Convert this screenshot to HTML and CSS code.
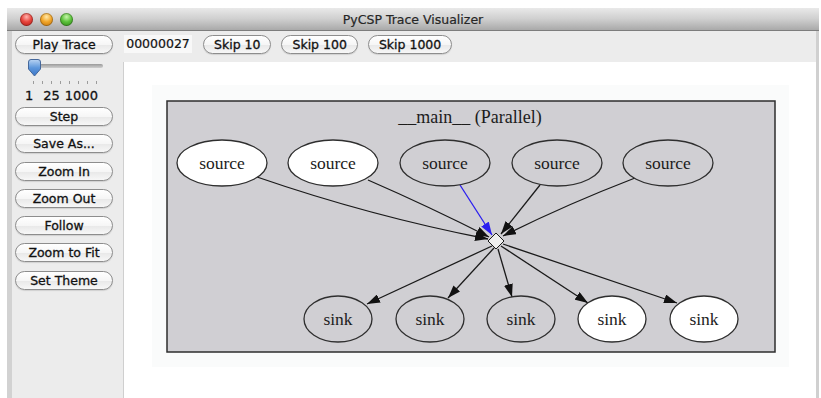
FILE: index.html
```html
<!DOCTYPE html>
<html lang="en">
<head>
    <meta charset="UTF-8">
    <title>PyCSP Trace Visualizer</title>
    <link rel="stylesheet" href="styles.css">
</head>
<body>

<div class="window">
    <div class="titlebar">
        <div class="lights">
            <span class="light red"></span>
            <span class="light amber"></span>
            <span class="light green"></span>
        </div>
        <div class="title">PyCSP Trace Visualizer</div>
        <div></div>
    </div>

    <div class="content">
        <div class="sidebar">
            <button class="btn">Play Trace</button>

            <div class="slider">
                <div class="track"></div>
                <svg class="thumb" width="15" height="18" viewBox="0 0 15 18">
                    <defs>
                        <linearGradient id="thumbFill" x1="0" y1="0" x2="0" y2="1">
                            <stop offset="0" stop-color="#b9d4f3"/>
                            <stop offset="0.5" stop-color="#5d97dc"/>
                            <stop offset="1" stop-color="#3a74c6"/>
                        </linearGradient>
                    </defs>
                    <path d="M1.5,3 Q1.5,0.5 4,0.5 H11 Q13.5,0.5 13.5,3 V10 L7.5,17 L1.5,10 Z" fill="url(#thumbFill)" stroke="#45689b" stroke-width="1"/>
                </svg>
                <div class="ticks">
                    <i></i><i></i><i></i><i></i><i></i><i></i><i></i><i></i>
                </div>
            </div>
            <div class="speed-labels">
                <span>1</span><span class="mid">25</span><span class="max">1000</span>
            </div>

            <div class="actions">
                <button class="btn">Step</button>
                <button class="btn">Save As...</button>
                <button class="btn">Zoom In</button>
                <button class="btn">Zoom Out</button>
                <button class="btn">Follow</button>
                <button class="btn">Zoom to Fit</button>
                <button class="btn">Set Theme</button>
            </div>
        </div>

        <div class="right">
            <div class="toolbar">
                <span class="counter">00000027</span>
                <button class="btn skip">Skip 10</button>
                <button class="btn skip">Skip 100</button>
                <button class="btn skip">Skip 1000</button>
            </div>

            <div class="canvas">
                <svg class="graph" width="691" height="336" viewBox="124 62 691 336">
                    <defs>
                        <marker id="head" viewBox="0 0 13 9" refX="13" refY="4.5" markerWidth="13" markerHeight="9" orient="auto" markerUnits="userSpaceOnUse">
                            <path d="M0,0 L13,4.5 L0,9 Z" fill="#111"/>
                        </marker>
                        <marker id="headBlue" viewBox="0 0 13 9" refX="13" refY="4.5" markerWidth="13" markerHeight="9" orient="auto" markerUnits="userSpaceOnUse">
                            <path d="M0,0 L13,4.5 L0,9 Z" fill="#2a1ef0"/>
                        </marker>
                    </defs>

                    <rect class="page" x="152" y="85" width="637" height="282"/>
                    <rect class="cluster" x="167" y="101" width="608" height="251"/>
                    <text class="cluster-label" x="470" y="123">__main__ (Parallel)</text>

                    <!-- edges into the channel -->
                    <path class="edge" d="M257,177 Q370,216 488,239" marker-end="url(#head)"/>
                    <path class="edge" d="M368,180 Q430,207 489,237" marker-end="url(#head)"/>
                    <path class="edge blue" d="M460,185 L492,235" marker-end="url(#headBlue)"/>
                    <path class="edge" d="M540,185 L501,234" marker-end="url(#head)"/>
                    <path class="edge" d="M635,178 Q565,205 503,236" marker-end="url(#head)"/>

                    <!-- edges out of the channel -->
                    <path class="edge" d="M492,246 L367,304" marker-end="url(#head)"/>
                    <path class="edge" d="M494,248 L448,298" marker-end="url(#head)"/>
                    <path class="edge" d="M498,249 L512,297" marker-end="url(#head)"/>
                    <path class="edge" d="M501,246 L588,303" marker-end="url(#head)"/>
                    <path class="edge" d="M503,244 L677,303" marker-end="url(#head)"/>

                    <polygon class="channel" points="496,233 504,241 496,249 488,241"/>

                    <ellipse class="node active" cx="222" cy="163" rx="45" ry="23"/>
                    <text class="label" x="222" y="169">source</text>
                    <ellipse class="node active" cx="333" cy="163" rx="45" ry="23"/>
                    <text class="label" x="333" y="169">source</text>
                    <ellipse class="node" cx="445" cy="163" rx="45" ry="23"/>
                    <text class="label" x="445" y="169">source</text>
                    <ellipse class="node" cx="557" cy="163" rx="45" ry="23"/>
                    <text class="label" x="557" y="169">source</text>
                    <ellipse class="node" cx="668" cy="163" rx="45" ry="23"/>
                    <text class="label" x="668" y="169">source</text>

                    <ellipse class="node" cx="338" cy="319" rx="34" ry="23"/>
                    <text class="label" x="338" y="325">sink</text>
                    <ellipse class="node" cx="430" cy="319" rx="34" ry="23"/>
                    <text class="label" x="430" y="325">sink</text>
                    <ellipse class="node" cx="521" cy="319" rx="34" ry="23"/>
                    <text class="label" x="521" y="325">sink</text>
                    <ellipse class="node active" cx="612" cy="319" rx="34" ry="23"/>
                    <text class="label" x="612" y="325">sink</text>
                    <ellipse class="node active" cx="704" cy="319" rx="34" ry="23"/>
                    <text class="label" x="704" y="325">sink</text>
                </svg>
            </div>
        </div>
    </div>
</div>

</body>
</html>
```

FILE: styles.css
```css
body {
    margin: 0;
    background-color: #ffffff;
    font-family: "DejaVu Sans", Verdana, sans-serif;
    overflow: hidden;
}
.window {
    margin: 8px 0 0 7px;
    width: 804px;
    height: 390px;
    border-left: 5px solid #d2d2d2;
    border-right: 3px solid #d0d0d0;
    background-color: #ececec;
    display: flex;
    flex-direction: column;
}
.titlebar {
    height: 22px;
    border-bottom: 1px solid #7d7d7d;
    background: linear-gradient(#e9e9e9, #cfcfcf 50%, #a9a9a9);
    display: grid;
    grid-template-columns: 1fr auto 1fr;
    align-items: center;
    margin-left: -5px;
    margin-right: -3px;
}
.lights {
    display: flex;
    gap: 7px;
    padding-left: 13px;
}
.light {
    width: 13px;
    height: 13px;
    border-radius: 50%;
    box-shadow: inset 0 0 0 1px rgba(0, 0, 0, 0.25);
}
.red {
    background: radial-gradient(circle at 50% 30%, #ffb4ae 0, #e8463e 45%, #a9140f 100%);
}
.amber {
    background: radial-gradient(circle at 50% 30%, #ffe9a8 0, #f2a62a 45%, #b86b05 100%);
}
.green {
    background: radial-gradient(circle at 50% 30%, #c6f5a9 0, #5cc23c 45%, #2a7d12 100%);
}
.title {
    font-size: 12.5px;
    color: #262626;
    -webkit-text-stroke: 0.2px #262626;
}
.content {
    flex: 1;
    display: flex;
    min-height: 0;
}
.sidebar {
    width: 98px;
    padding: 4px 10px 0 3px;
    display: flex;
    flex-direction: column;
}
.btn {
    display: block;
    height: 19px;
    padding: 0;
    border: 1px solid #8d8d8d;
    border-radius: 10px;
    background: linear-gradient(#ffffff, #f6f6f6 50%, #e9e9e9 55%, #f7f7f7);
    box-shadow: 0 1px 1px rgba(0, 0, 0, 0.12);
    font-family: "DejaVu Sans", Verdana, sans-serif;
    font-size: 12.5px;
    line-height: 17px;
    color: #111111;
    -webkit-text-stroke: 0.3px #111111;
    text-align: center;
    cursor: pointer;
}
.sidebar .btn {
    width: 98px;
}
.slider {
    position: relative;
    height: 32px;
    margin-top: 2px;
}
.track {
    position: absolute;
    left: 13px;
    top: 8px;
    width: 75px;
    height: 4px;
    border-radius: 2px;
    background: linear-gradient(#9a9a9a, #cfcfcf);
}
.thumb {
    position: absolute;
    left: 12px;
    top: 3px;
}
.ticks {
    position: absolute;
    left: 18px;
    top: 25px;
    width: 64px;
    display: flex;
    justify-content: space-between;
}
.ticks i {
    width: 1px;
    height: 3px;
    background-color: #9c9c9c;
}
.speed-labels {
    display: flex;
    padding-left: 10px;
    font-size: 13px;
    color: #111111;
    -webkit-text-stroke: 0.3px #111111;
    height: 16px;
    line-height: 15px;
}
.speed-labels .mid {
    margin-left: 10px;
}
.speed-labels .max {
    margin-left: 5px;
}
.actions {
    margin-top: 3px;
    display: flex;
    flex-direction: column;
    gap: 8.3px;
}
.right {
    flex: 1;
    display: flex;
    flex-direction: column;
    min-width: 0;
}
.toolbar {
    height: 27px;
    padding: 4px 0 0 1px;
    display: flex;
    align-items: flex-start;
    gap: 10px;
}
.counter {
    width: 68px;
    height: 18px;
    line-height: 18px;
    background-color: #f8f8f8;
    font-size: 12.5px;
    color: #111111;
    -webkit-text-stroke: 0.2px #111111;
    text-align: center;
}
.skip {
    padding: 0 10px;
}
.toolbar .counter + .skip {
    margin-left: 1px;
}
.canvas {
    flex: 1;
    background-color: #ffffff;
    border-left: 1px solid #cfcfcf;
    overflow: hidden;
}
.graph {
    display: block;
}
.page {
    fill: #fafbfb;
}
.cluster {
    fill: #d0cfd3;
    stroke: #2e2e2e;
    stroke-width: 1.5;
}
.cluster-label {
    font-family: "Liberation Serif", "Times New Roman", serif;
    font-size: 18px;
    text-anchor: middle;
    fill: #1c1c1c;
}
.edge {
    fill: none;
    stroke: #1a1a1a;
    stroke-width: 1.3;
}
.edge.blue {
    stroke: #2a1ef0;
}
.channel {
    fill: #efefef;
    stroke: #1a1a1a;
    stroke-width: 1;
}
.node {
    fill: #d0cfd3;
    stroke: #2e2e2e;
    stroke-width: 1.3;
}
.node.active {
    fill: #ffffff;
}
.label {
    font-family: "Liberation Serif", "Times New Roman", serif;
    font-size: 17.5px;
    text-anchor: middle;
    fill: #1c1c1c;
}
```
